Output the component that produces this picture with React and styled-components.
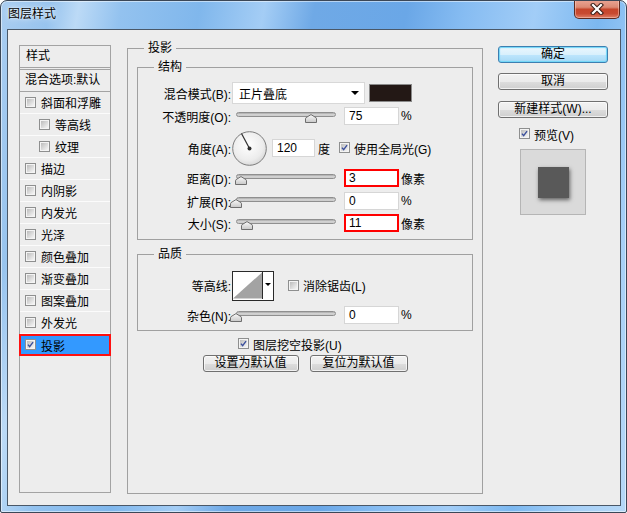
import React from 'react'
import styled, { createGlobalStyle } from 'styled-components'

const styleItems = [
    { name: '斜面和浮雕' },
    { name: '等高线', sub: true },
    { name: '纹理', sub: true },
    { name: '描边' },
    { name: '内阴影' },
    { name: '内发光' },
    { name: '光泽' },
    { name: '颜色叠加' },
    { name: '渐变叠加' },
    { name: '图案叠加' },
    { name: '外发光' },
    { name: '投影', on: true },
]

function Check({ on }) {
    return (
        <CheckBox>
            {on ? (
                <svg width="9" height="9" viewBox="0 0 9 9">
                    <path d="M1.2 4.6 L3.4 7.2 L7.8 1.4" fill="none" stroke="#3b4f9c" strokeWidth="1.8" />
                </svg>
            ) : null}
        </CheckBox>
    )
}

function Slider({ pos }) {
    return (
        <SliderBox>
            <Track />
            <Thumb width="12" height="9" viewBox="0 0 12 9" style={{ left: pos - 237 }}>
                <defs>
                    <linearGradient id="tg" x1="0" y1="0" x2="0" y2="1">
                        <stop offset="0" stopColor="#fafafa" />
                        <stop offset="1" stopColor="#c8c8c8" />
                    </linearGradient>
                </defs>
                <path d="M0.5 8.5 V4.8 Q0.5 3.6 2 3 L6 0.6 L10 3 Q11.5 3.6 11.5 4.8 V8.5 Z" fill="url(#tg)" stroke="#6e6e6e" />
            </Thumb>
        </SliderBox>
    )
}

function App() {
    return (
        <>
            <GlobalStyle />
            <Window>
                <TitleBar>
                    <Title>图层样式</Title>
                    <CloseButton>
                        <svg width="14" height="12" viewBox="0 0 14 12">
                            <path d="M3 2 L11 10 M11 2 L3 10" stroke="#3a1d17" strokeWidth="4.2" strokeLinecap="square" />
                            <path d="M3 2 L11 10 M11 2 L3 10" stroke="#ffffff" strokeWidth="2.2" strokeLinecap="square" />
                        </svg>
                    </CloseButton>
                </TitleBar>

                <Client>
                    <StyleList>
                        <ListHeader>样式</ListHeader>
                        <BlendRow>混合选项:默认</BlendRow>
                        {styleItems.map((item) => (
                            <ListItem key={item.name} $sub={item.sub} $on={item.on}>
                                <Check on={item.on} />
                                {item.name}
                            </ListItem>
                        ))}
                    </StyleList>

                    <MainGroup>
                        <GroupTitle $offset={7}>投影</GroupTitle>

                        <InnerGroup $bottom={5}>
                            <GroupTitle $offset={16}>结构</GroupTitle>
                            <Row $mt={7}>
                                <FieldLabel>混合模式(B):</FieldLabel>
                                <Select>
                                    正片叠底
                                    <Caret />
                                </Select>
                                <Swatch />
                            </Row>
                            <Row $mt={1}>
                                <FieldLabel>不透明度(O):</FieldLabel>
                                <Slider pos={311} />
                                <NumBox>75</NumBox>
                                <Unit>%</Unit>
                            </Row>
                            <Row $mt={2} $h={38}>
                                <FieldLabel>角度(A):</FieldLabel>
                                <Dial width="35" height="35" viewBox="0 0 35 35">
                                    <defs>
                                        <radialGradient id="dg" cx="0.45" cy="0.4" r="0.65">
                                            <stop offset="0" stopColor="#ffffff" />
                                            <stop offset="0.7" stopColor="#ececec" />
                                            <stop offset="1" stopColor="#d4d4d4" />
                                        </radialGradient>
                                    </defs>
                                    <circle cx="17.5" cy="17.5" r="16.8" fill="url(#dg)" stroke="#7c7c7c" />
                                    <line x1="17.5" y1="17.5" x2="9.5" y2="2.5" stroke="#2f2f2f" strokeWidth="1.2" />
                                    <circle cx="17.5" cy="17.5" r="2" fill="#2f2f2f" />
                                </Dial>
                                <NumBox $w={43} $ml={5}>120</NumBox>
                                <Unit $ml={3}>度</Unit>
                                <CheckWrap $ml={9}>
                                    <Check on />
                                    使用全局光(G)
                                </CheckWrap>
                            </Row>
                            <Row>
                                <FieldLabel>距离(D):</FieldLabel>
                                <Slider pos={241} />
                                <NumBox $alert>3</NumBox>
                                <Unit>像素</Unit>
                            </Row>
                            <Row $mt={1}>
                                <FieldLabel>扩展(R):</FieldLabel>
                                <Slider pos={236} />
                                <NumBox>0</NumBox>
                                <Unit>%</Unit>
                            </Row>
                            <Row>
                                <FieldLabel>大小(S):</FieldLabel>
                                <Slider pos={247} />
                                <NumBox $alert>11</NumBox>
                                <Unit>像素</Unit>
                            </Row>
                        </InnerGroup>

                        <InnerGroup $top={6} $bottom={4}>
                            <GroupTitle $offset={16}>品质</GroupTitle>
                            <Row $mt={8} $h={31}>
                                <FieldLabel>等高线:</FieldLabel>
                                <Contour>
                                    <ContourCurve width="30" height="27" viewBox="0 0 30 27">
                                        <rect width="30" height="27" fill="#ffffff" />
                                        <path d="M0 27 L30 0 L30 27 Z" fill="#a3a3a3" />
                                    </ContourCurve>
                                    <ContourDrop>
                                        <Caret $small />
                                    </ContourDrop>
                                </Contour>
                                <CheckWrap $ml={14}>
                                    <Check />
                                    消除锯齿(L)
                                </CheckWrap>
                            </Row>
                            <Row $mt={3}>
                                <FieldLabel>杂色(N):</FieldLabel>
                                <Slider pos={236} />
                                <NumBox>0</NumBox>
                                <Unit>%</Unit>
                            </Row>
                        </InnerGroup>

                        <KnockoutRow>
                            <CheckWrap>
                                <Check on />
                                图层挖空投影(U)
                            </CheckWrap>
                        </KnockoutRow>
                        <ButtonRow>
                            <Button $w={96}>设置为默认值</Button>
                            <Button $w={98}>复位为默认值</Button>
                        </ButtonRow>
                    </MainGroup>

                    <Side>
                        <Button $w={110} $primary $mt={6}>确定</Button>
                        <Button $w={110} $mt={10}>取消</Button>
                        <Button $w={110} $mt={11}>新建样式(W)...</Button>
                        <PreviewToggle>
                            <CheckWrap>
                                <Check on />
                                预览(V)
                            </CheckWrap>
                        </PreviewToggle>
                        <PreviewBox>
                            <PreviewSwatch />
                        </PreviewBox>
                    </Side>
                </Client>
            </Window>
        </>
    )
}

export default App

const GlobalStyle = createGlobalStyle`
    html, body {
        margin: 0;
        padding: 0;
        background: #ffffff;
    }
    body {
        font-family: "Liberation Sans", "Noto Sans CJK SC", sans-serif;
        font-size: 12px;
        color: #000;
    }
    * {
        box-sizing: border-box;
    }
`

const Window = styled.div`
    width: 627px;
    height: 513px;
    display: flex;
    flex-direction: column;
    border: 1px solid #3b4757;
    border-radius: 7px 7px 2px 2px;
    overflow: hidden;
    background: linear-gradient(100deg, #a9cdf1 0%, #98c4ee 7%, #bcdaf6 11%, #93c2ef 17%, #80b7ec 28%, #a4cdf5 37%, #6fa9e6 44%, #6aa7e7 57%, #86bcf2 65%, #a2cdf7 75%, #7cb8f0 84%, #a7d0f7 93%, #b6d8f7 100%);
    box-shadow: inset 0 0 0 1px rgba(255, 255, 255, 0.5);
`

const TitleBar = styled.div`
    height: 28px;
    flex: none;
    display: flex;
    align-items: flex-start;
    padding-left: 7px;
`

const Title = styled.div`
    line-height: 27px;
    color: #000;
    text-shadow: 0 0 6px rgba(255, 255, 255, 0.9), 0 0 2px rgba(255, 255, 255, 0.9);
`

const CloseButton = styled.div`
    width: 46px;
    height: 19px;
    margin: -1px 6px 0 auto;
    border: 1px solid #5e2a20;
    border-top: none;
    border-radius: 0 0 5px 5px;
    display: flex;
    align-items: center;
    justify-content: center;
    background: linear-gradient(#eaa595 0%, #dc8a74 40%, #c6452b 52%, #c84a31 75%, #de7f66 100%);
    box-shadow: inset 0 0 0 1px rgba(255, 220, 210, 0.45);
`

const Client = styled.div`
    flex: 1;
    margin: 0 5px 6px 6px;
    border: 1px solid #4a5868;
    background: #ededed;
    display: flex;
    align-items: flex-start;
    padding: 10px 0 0 11px;
`

const StyleList = styled.div`
    margin-top: 5px;
    width: 92px;
    height: 448px;
    flex: none;
    border: 1px solid #a3a3a3;
`

const ListHeader = styled.div`
    height: 24px;
    line-height: 21px;
    padding-left: 6px;
    border-bottom: 3px double #a3a3a3;
`

const BlendRow = styled.div`
    height: 22px;
    line-height: 21px;
    padding-left: 5px;
    border-bottom: 1px solid #a3a3a3;
    white-space: nowrap;
    overflow: hidden;
`

const ListItem = styled.div`
    height: 22px;
    display: flex;
    align-items: center;
    gap: 5px;
    padding-left: ${p => (p.$sub ? 19 : 5)}px;
    border-bottom: 1px solid #fbfbfb;
    white-space: nowrap;
    ${p => p.$on && `
        margin: 0 -1px;
        padding-left: 6px;
        border-bottom: none;
        background: #3399ff;
        box-shadow: inset 0 0 0 2px #ff1010;
    `}
`

const CheckBox = styled.span`
    width: 11px;
    height: 11px;
    flex: none;
    padding: 1px;
    border: 1px solid #8e8f8f;
    background: linear-gradient(135deg, #bcbcbc, #f6f6f6) content-box, #f4f4f4;
    display: flex;
    align-items: center;
    justify-content: center;
    margin-top: -1px;
`

const CheckWrap = styled.label`
    display: flex;
    align-items: center;
    gap: 4px;
    margin-left: ${p => p.$ml || 0}px;
    white-space: nowrap;
`

const MainGroup = styled.fieldset`
    margin: 0 0 0 16px;
    min-width: 0;
    width: 356px;
    height: 454px;
    flex: none;
    border: 1px solid #a0a0a0;
    padding: 3px 9px 0;
`

const InnerGroup = styled.fieldset`
    margin: ${p => p.$top || 0}px 0 0;
    min-width: 0;
    border: 1px solid #a0a0a0;
    padding: 0 0 ${p => p.$bottom}px;
`

const GroupTitle = styled.legend`
    margin-left: ${p => p.$offset}px;
    padding: 0 4px;
    line-height: 16px;
`

const Row = styled.div`
    display: flex;
    align-items: center;
    height: ${p => p.$h || 22}px;
    margin-top: ${p => p.$mt || 0}px;
`

const FieldLabel = styled.span`
    width: 93px;
    flex: none;
    text-align: right;
    white-space: nowrap;
`

const Select = styled.div`
    width: 133px;
    height: 22px;
    margin-left: 1px;
    padding: 0 5px 0 6px;
    background: #ffffff;
    border: 1px solid #d8d8d8;
    display: flex;
    align-items: center;
    justify-content: space-between;
`

const Caret = styled.span`
    width: 0;
    height: 0;
    border-left: ${p => (p.$small ? 3 : 4)}px solid transparent;
    border-right: ${p => (p.$small ? 3 : 4)}px solid transparent;
    border-top: ${p => (p.$small ? 3 : 4)}px solid #000;
`

const Swatch = styled.div`
    width: 43px;
    height: 18px;
    margin-left: 4px;
    background: #231815;
    border: 1px solid #8a8a8a;
`

const SliderBox = styled.div`
    position: relative;
    width: 106px;
    height: 22px;
    flex: none;
`

const Track = styled.div`
    margin: 7px 0 0 5px;
    width: 100px;
    height: 5px;
    border-radius: 3px;
    border: 1px solid #8f8f8f;
    background: linear-gradient(#a9a9a9, #d9d9d9 60%, #c6c6c6);
`

const Thumb = styled.svg`
    position: absolute;
    top: 9px;
`

const NumBox = styled.div`
    width: ${p => p.$w || 55}px;
    height: 18px;
    flex: none;
    margin-left: ${p => (p.$ml == null ? 7 : p.$ml)}px;
    padding-left: ${p => (p.$alert ? 3 : 4)}px;
    background: #ffffff;
    border: ${p => (p.$alert ? '2px solid #ff0000' : '1px solid #d6d6d6')};
    display: flex;
    align-items: center;
`

const Unit = styled.span`
    margin-left: ${p => p.$ml || 2}px;
    white-space: nowrap;
`

const Dial = styled.svg`
    margin-left: 1px;
    flex: none;
`

const Contour = styled.div`
    width: 42px;
    height: 30px;
    margin-left: 1px;
    flex: none;
    display: flex;
    border: 1px solid #2a2a2a;
    background: #ffffff;
`

const ContourCurve = styled.svg`
    display: block;
    flex: none;
    border-right: 1px solid #2a2a2a;
`

const ContourDrop = styled.div`
    flex: 1;
    display: flex;
    align-items: center;
    justify-content: center;
    padding-bottom: 3px;
`

const KnockoutRow = styled.div`
    height: 18px;
    margin-top: 4px;
    padding-left: 101px;
    display: flex;
    align-items: center;
`

const ButtonRow = styled.div`
    margin-top: 2px;
    display: flex;
    justify-content: center;
    gap: 11px;
`

const Button = styled.button`
    width: ${p => p.$w}px;
    height: 17px;
    margin: ${p => p.$mt || 0}px 0 0;
    padding: 0;
    flex: none;
    font: inherit;
    line-height: 15px;
    color: #000;
    border: 1px solid ${p => (p.$primary ? '#3c7fb1' : '#707070')};
    border-radius: 3px;
    background: ${p => p.$primary
        ? 'linear-gradient(#eaf6fd 0%, #d9f0fc 50%, #bee6fd 51%, #a7d9f5 100%)'
        : 'linear-gradient(#f2f2f2 0%, #ebebeb 50%, #dddddd 51%, #cfcfcf 100%)'};
    box-shadow: ${p => (p.$primary ? 'inset 0 0 1px 1px #6fd6f8' : 'inset 0 0 0 1px rgba(255, 255, 255, 0.7)')};
`

const Side = styled.div`
    margin-left: 15px;
    width: 110px;
    flex: none;
    display: flex;
    flex-direction: column;
`

const PreviewToggle = styled.div`
    height: 16px;
    margin: 8px 0 0 21px;
    display: flex;
    align-items: center;
`

const PreviewBox = styled.div`
    width: 66px;
    height: 66px;
    margin: 7px 0 0 22px;
    background: #dadada;
    border: 1px solid #b5b5b5;
    display: flex;
    align-items: center;
    justify-content: center;
`

const PreviewSwatch = styled.div`
    width: 31px;
    height: 31px;
    background: #595959;
    box-shadow: 1px 2px 4px rgba(0, 0, 0, 0.55);
`
